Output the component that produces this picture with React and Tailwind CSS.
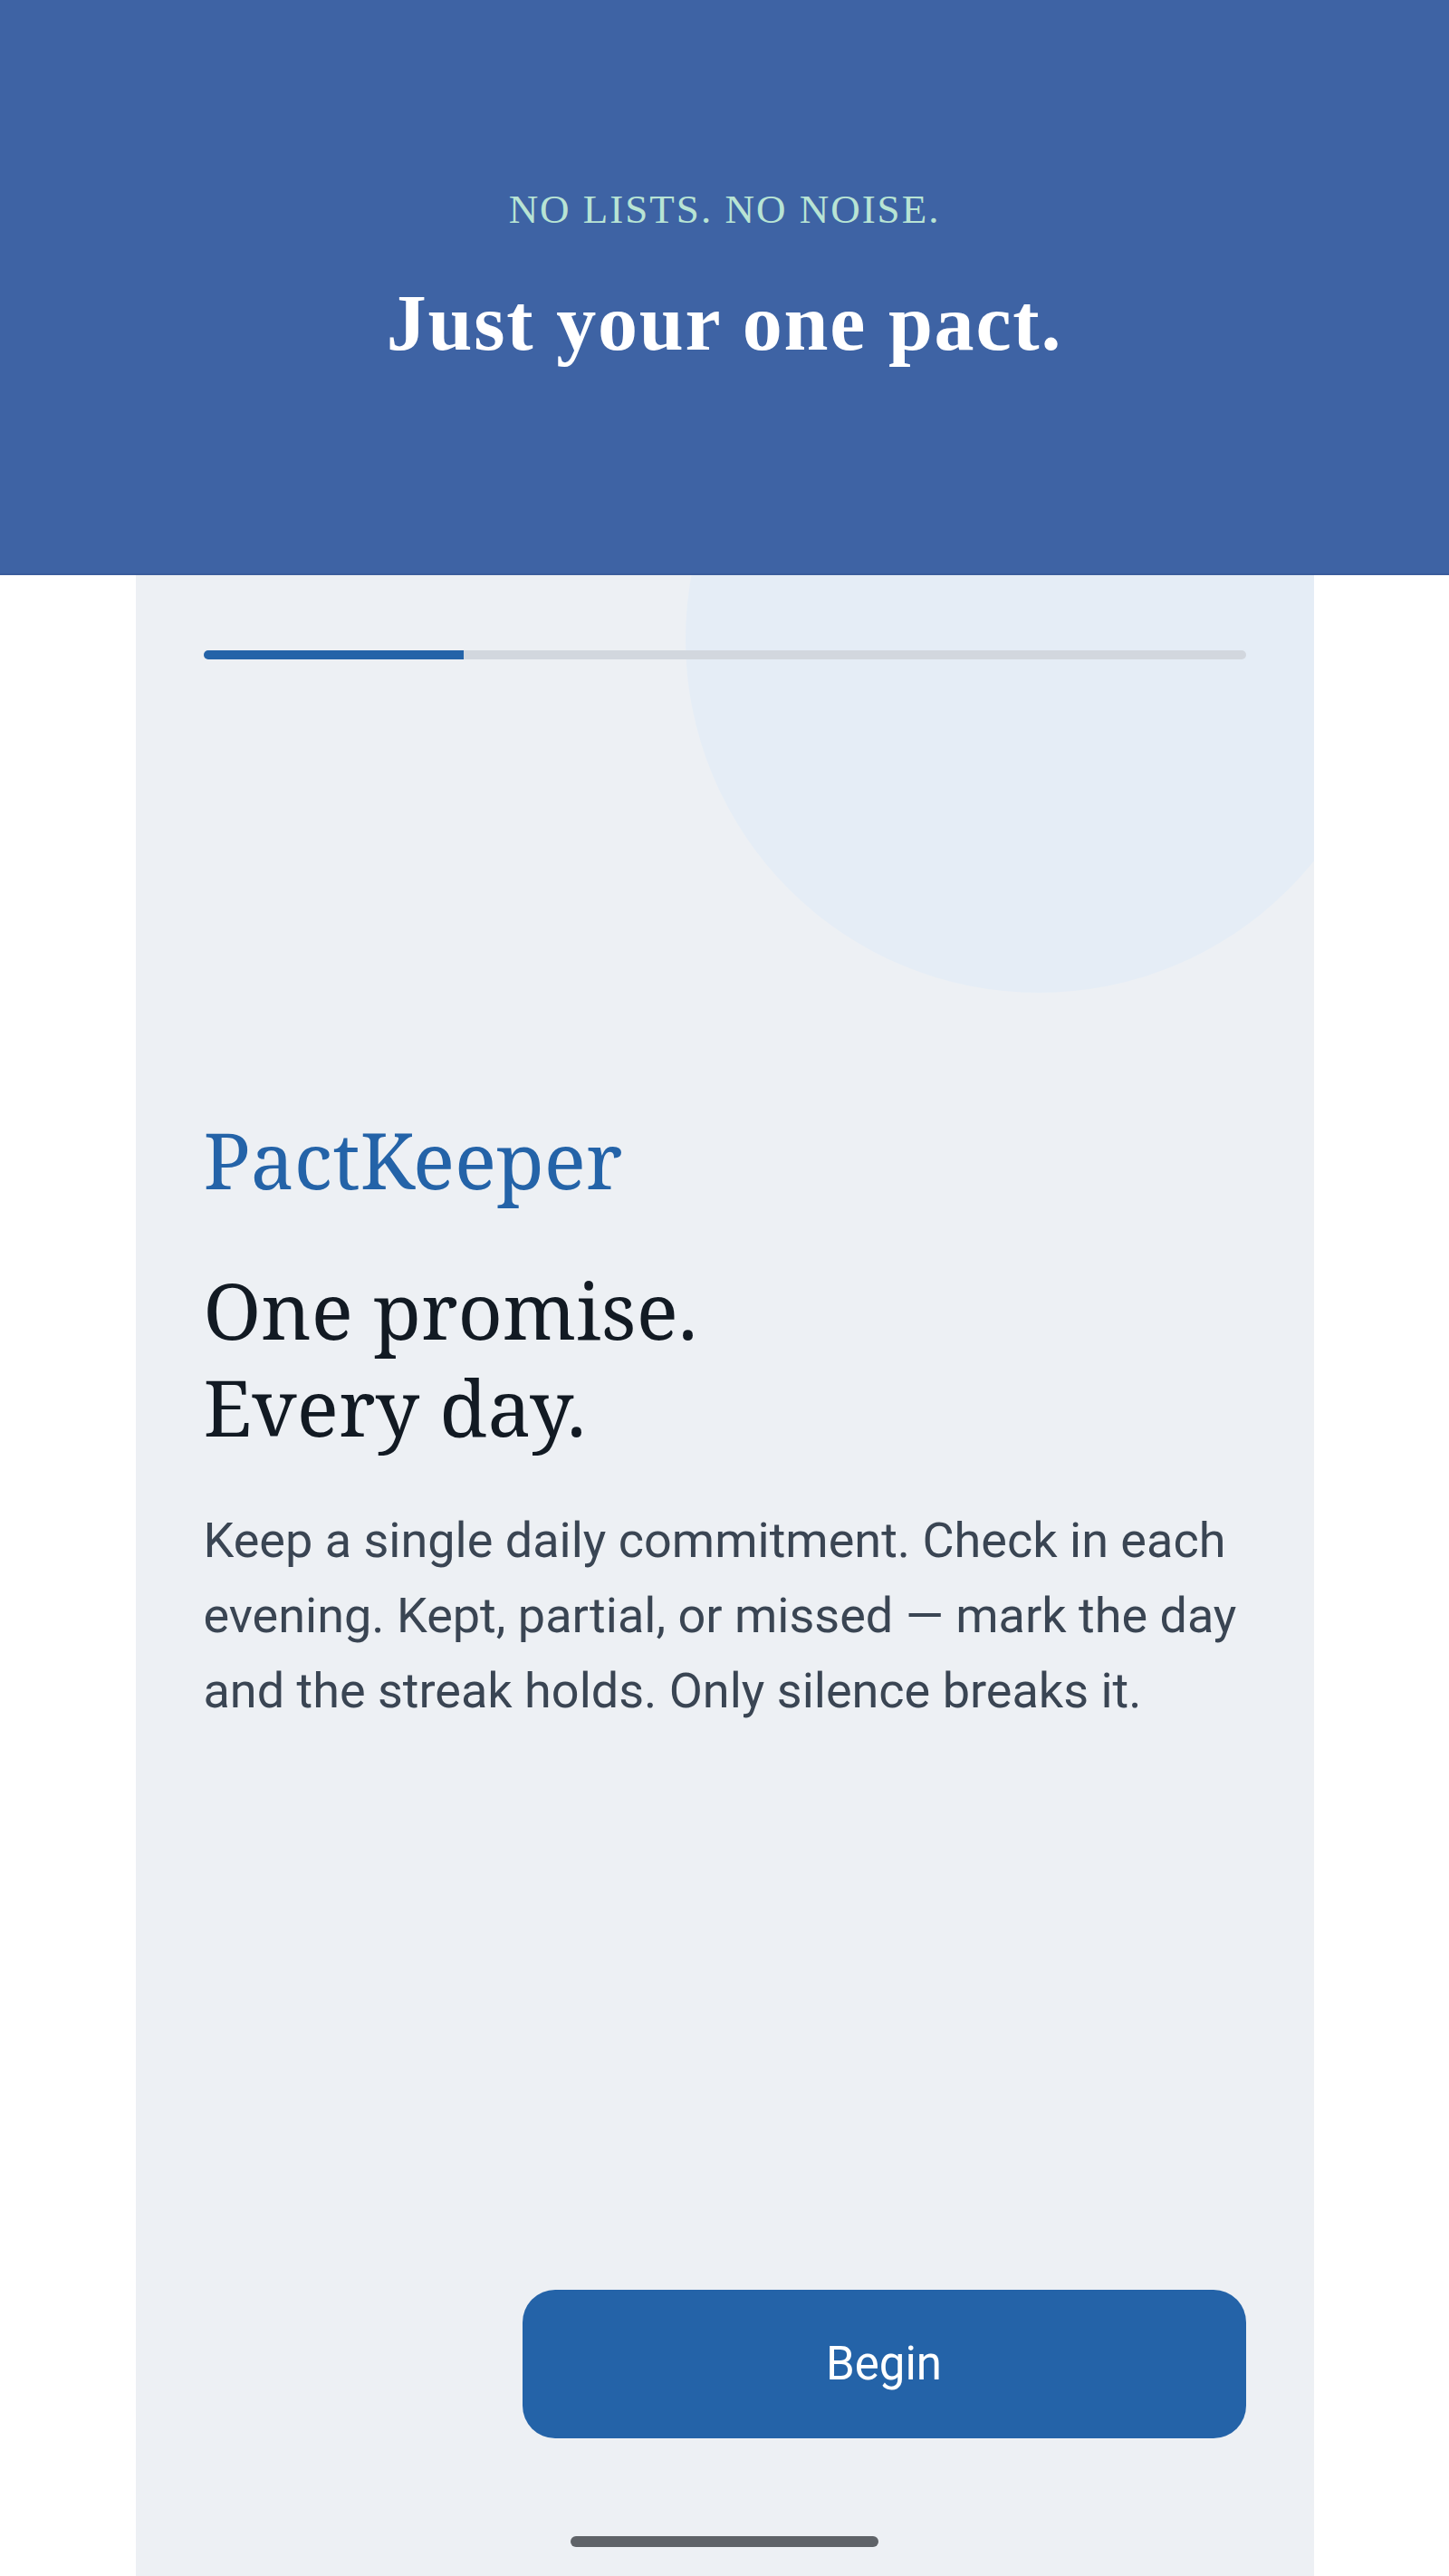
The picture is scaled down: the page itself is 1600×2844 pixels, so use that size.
export default function App() {
  const serif = { fontFamily: '"Noto Serif", "DejaVu Serif", serif' };
  const headerSerif = { fontFamily: '"Palatino Linotype", "Book Antiqua", Palatino, "Liberation Serif", serif' };

  return (
    <div className="min-h-screen bg-white flex flex-col" style={{ fontFamily: 'Roboto, "Noto Sans", sans-serif' }}>
      {/* top banner */}
      <header className="h-[635px] bg-[#3e63a4] border-b-2 border-[#3a5c9b] flex flex-col items-center pt-[209px] shrink-0">
        <p style={headerSerif} className="text-[45px] leading-[45px] tracking-[2px] text-[#b8e4d4]">
          NO LISTS. NO NOISE.
        </p>
        <h1 style={headerSerif} className="mt-[59px] text-[88px] leading-[88px] font-bold tracking-[1.8px] text-white">
          Just your one pact.
        </h1>
      </header>

      {/* onboarding card */}
      <main className="relative overflow-hidden mx-auto w-[1301px] flex-1 min-h-[2209px] bg-[#edf0f4] px-[75px] flex flex-col">
        <div className="absolute -top-[319px] -right-[86px] w-[780px] h-[780px] rounded-full bg-[#e5edf6]" />

        <div className="relative mt-[83px] h-[10px] rounded-full bg-[#d2d7de] overflow-hidden">
          <div className="h-full w-1/4 bg-[#2463a8]" />
        </div>

        <div className="relative mt-[498px]">
          <h2 style={serif} className="text-[86px] leading-[107px] text-[#2463a8]">
            PactKeeper
          </h2>
          <h3 style={serif} className="mt-[59px] text-[86px] leading-[107px] text-[#121a23]">
            One promise.
            <br />
            Every day.
          </h3>
          <p className="mt-[53px] text-[54px] leading-[83px] text-[#3a4553]">
            Keep a single daily commitment. Check in each evening. Kept, partial, or missed — mark the day and the
            streak holds. Only silence breaks it.
          </p>
        </div>

        <div className="flex-1" />

        <div className="flex justify-end">
          <button className="w-[799px] h-[164px] rounded-[36px] bg-[#2463a8] text-white text-[51px]">Begin</button>
        </div>

        <div className="mt-[108px] mb-[32px] flex justify-center">
          <div className="w-[340px] h-[12px] rounded-full bg-[#5f6368]" />
        </div>
      </main>
    </div>
  );
}
